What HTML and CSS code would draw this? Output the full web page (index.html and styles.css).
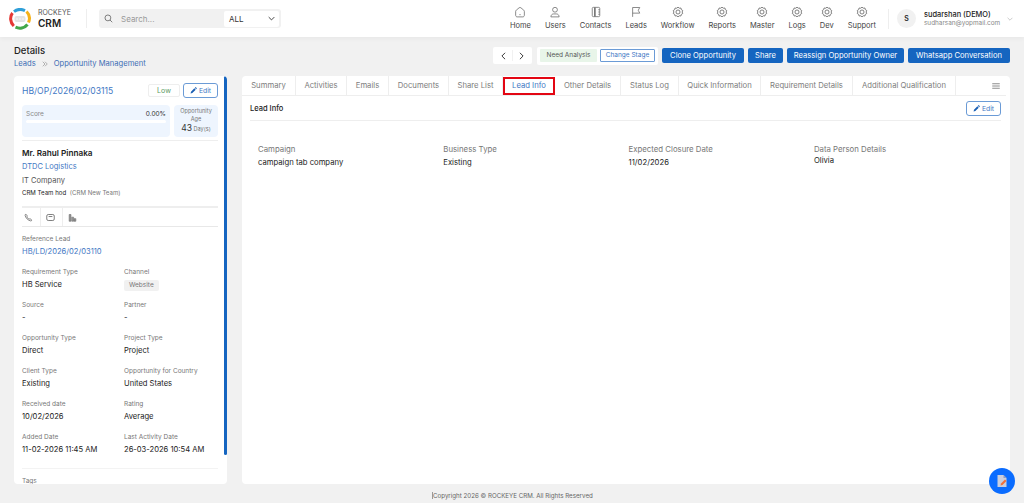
FILE: index.html
```html
<!DOCTYPE html>
<html lang="en">
<head>
    <meta charset="UTF-8">
    <meta name="viewport" content="width=device-width, initial-scale=1.0">
    <title>Rockeye CRM - Details</title>
    <link rel="stylesheet" href="styles.css">
</head>
<body>
    <svg class="defs" width="0" height="0">
        <symbol id="gear" viewBox="0 0 16 16">
            <path d="M8 1.5l1.7 1.4 2.2-.2.5 2.1 1.900 1.200-.8 2 .8 2-1.900 1.200-.5 2.100-2.200-.2L8 14.500l-1.700-1.400-2.200.2-.5-2.100-1.900-1.200.8-2-.8-2 1.900-1.200.5-2.100 2.200.2z" fill="none" stroke="currentColor" stroke-width="1.100"/>
            <circle cx="8" cy="8" r="2.700" fill="none" stroke="currentColor" stroke-width="1.100"/>
        </symbol>
        <symbol id="pencil" viewBox="0 0 12 12">
            <path d="M1 11l.7-3 5.800-5.800 2.300 2.300L4 10.300zM8.300 1.400l.8-.8c.3-.3.7-.3 1 0l1.300 1.300c.3.3.3.7 0 1l-.8.8z" fill="currentColor"/>
        </symbol>
    </svg>

    <header class="topbar">
        <div class="brand">
            <svg class="logo" viewBox="0 0 22 22">
                <path d="M5 3.600C8 1.300 12.500.9 16 2.600" fill="none" stroke="#2f9fd8" stroke-width="3"/>
                <path d="M17.500 3.500C20.500 6.500 21 11 19.500 14.500" fill="none" stroke="#f5b21a" stroke-width="3"/>
                <path d="M18.500 16.500C15.500 20.300 10.500 21 6.500 19.200" fill="none" stroke="#43a84a" stroke-width="3"/>
                <path d="M4.800 18C1 14.500.7 8.500 3.500 5" fill="none" stroke="#e53935" stroke-width="3"/>
                <rect x="5.500" y="8" width="11" height="6" rx="2" fill="#e4e4e4"/>
                <circle cx="8" cy="11" r=".7" fill="#fff"/>
                <circle cx="11" cy="11" r=".7" fill="#fff"/>
                <circle cx="14" cy="11" r=".7" fill="#fff"/>
            </svg>
            <div class="brand-text">
                <span class="brand-top">ROCKEYE</span>
                <span class="brand-name">CRM</span>
            </div>
        </div>
        <div class="search">
            <svg class="search-icon" viewBox="0 0 12 12"><circle cx="5.200" cy="5.200" r="3.900" fill="none" stroke="#666" stroke-width="1.100"/><path d="M8 8l3 3" stroke="#666" stroke-width="1.100"/></svg>
            <span class="search-text">Search...</span>
            <div class="search-select">
                <span>ALL</span>
                <svg class="chev" viewBox="0 0 10 6"><path d="M1 1l4 4 4-4" fill="none" stroke="#333" stroke-width="1.300"/></svg>
            </div>
        </div>
        <nav class="nav">
            <a class="nav-item">
                <svg class="nav-icon" viewBox="0 0 16 16"><path d="M2.200 7.200C2.200 6.500 2.500 6 3 5.600L6.800 2.400c.7-.6 1.700-.6 2.400 0L13 5.600c.5.4.8.9.8 1.600v5.300c0 1.100-.9 2-2 2H4.200c-1.100 0-2-.9-2-2z" fill="none" stroke="currentColor"/><path d="M7.200 11.500h1.600" stroke="currentColor"/></svg>
                Home
            </a>
            <a class="nav-item">
                <svg class="nav-icon" viewBox="0 0 16 16"><circle cx="8" cy="5" r="3.200" fill="none" stroke="currentColor"/><path d="M2.500 14.500c.2-1.900.9-3 2-3.600 1-.5 6-.5 7 0 1.100.6 1.800 1.700 2 3.600z" fill="none" stroke="currentColor"/></svg>
                Users
            </a>
            <a class="nav-item">
                <svg class="nav-icon" viewBox="0 0 16 16"><rect x="3" y="1.800" width="10" height="12.400" rx="1.500" fill="none" stroke="currentColor"/><path d="M6.500 2v12" stroke="currentColor" stroke-width="2"/><path d="M11 5h2M11 8h2M11 11h2" stroke="currentColor"/></svg>
                Contacts
            </a>
            <a class="nav-item">
                <svg class="nav-icon" viewBox="0 0 16 16"><path d="M3.500 14.500V2h9.500l-2 3.700 2 3.800H3.500" fill="none" stroke="currentColor"/></svg>
                Leads
            </a>
            <a class="nav-item"><svg class="nav-icon"><use href="#gear"/></svg>Workflow</a>
            <a class="nav-item"><svg class="nav-icon"><use href="#gear"/></svg>Reports</a>
            <a class="nav-item"><svg class="nav-icon"><use href="#gear"/></svg>Master</a>
            <a class="nav-item"><svg class="nav-icon"><use href="#gear"/></svg>Logs</a>
            <a class="nav-item"><svg class="nav-icon"><use href="#gear"/></svg>Dev</a>
            <a class="nav-item"><svg class="nav-icon"><use href="#gear"/></svg>Support</a>
        </nav>
        <div class="user">
            <div class="avatar">S</div>
            <div class="user-text">
                <span class="user-name">sudarshan (DEMO)</span>
                <span class="user-mail">sudharsan@yopmail.com</span>
            </div>
            <svg class="user-chev" viewBox="0 0 10 6"><path d="M1 1l4 4 4-4" fill="none" stroke="#aaa" stroke-width="1"/></svg>
        </div>
    </header>

    <div class="page-head">
        <div>
            <h1>Details</h1>
            <div class="crumbs">
                <a>Leads</a>
                <svg class="crumb-sep" viewBox="0 0 8 8"><path d="M1 1l3 3-3 3M4 1l3 3-3 3" fill="none" stroke="#999" stroke-width="1"/></svg>
                <a>Opportunity Management</a>
            </div>
        </div>
        <div class="actions">
            <div class="pager">
                <svg class="pager-icon" viewBox="0 0 6 10"><path d="M5 1L1 5l4 4" fill="none" stroke="#333" stroke-width="1.200"/></svg>
                <span class="pager-line"></span>
                <svg class="pager-icon" viewBox="0 0 6 10"><path d="M1 1l4 4-4 4" fill="none" stroke="#333" stroke-width="1.200"/></svg>
            </div>
            <div class="stage">
                <span class="stage-chip">Need Analysis</span>
                <span class="stage-btn">Change Stage</span>
            </div>
            <button class="btn btn-clone">Clone Opportunity</button>
            <button class="btn btn-share">Share</button>
            <button class="btn btn-reassign">Reassign Opportunity Owner</button>
            <button class="btn btn-whatsapp">Whatsapp Conversation</button>
        </div>
    </div>

    <main class="content">
        <aside class="side">
            <div class="side-scroll"></div>
            <div class="side-top">
                <a class="opp-id">HB/OP/2026/02/03115</a>
                <span class="low">Low</span>
                <button class="edit"><svg class="pencil"><use href="#pencil"/></svg>Edit</button>
            </div>
            <div class="scores">
                <div class="score">
                    <div class="score-row"><span>Score</span><b>0.00%</b></div>
                    <div class="score-bar"></div>
                </div>
                <div class="age">
                    <div class="age-label">Opportunity Age</div>
                    <div class="age-val"><b>43</b> Day(s)</div>
                </div>
            </div>
            <div class="person">
                <div class="person-name">Mr. Rahul Pinnaka</div>
                <a class="person-co">DTDC Logistics</a>
                <div class="person-type">IT Company</div>
                <div class="person-team">CRM Team hod <span>(CRM New Team)</span></div>
            </div>
            <div class="contact-icons">
                <div class="contact-cell">
                    <svg class="contact-icon" viewBox="0 0 12 12"><path d="M2.500 1.500c-.8.300-1.300 1-1 2 .8 3.200 3.800 6.200 7 7 1 .3 1.700-.2 2-1l-2.500-2-1.300.8C5.500 7.600 4.400 6.500 3.700 5.300L4.500 4z" fill="none" stroke="#666" stroke-width="1"/></svg>
                </div>
                <div class="contact-cell">
                    <svg class="contact-icon" viewBox="0 0 12 12"><rect x="1" y="2" width="10" height="8" rx="2" fill="none" stroke="#555" stroke-width="1"/><path d="M3.500 4.700h5" stroke="#555" stroke-width="1"/></svg>
                </div>
                <div class="contact-cell">
                    <svg class="contact-icon" viewBox="0 0 12 12"><path d="M1.500 11V2h2.500v9zM5 11V5.500h2.500V11zM8 11V7.500h2.500V11z" fill="#999" stroke="#666" stroke-width=".7"/></svg>
                </div>
            </div>
            <div class="field ref-field">
                <label>Reference Lead</label>
                <a>HB/LD/2026/02/03110</a>
            </div>
            <div class="fields">
                <div class="field"><label>Requirement Type</label><p>HB Service</p></div>
                <div class="field"><label>Channel</label><p><span class="tag">Website</span></p></div>
                <div class="field"><label>Source</label><p>-</p></div>
                <div class="field"><label>Partner</label><p>-</p></div>
                <div class="field"><label>Opportunity Type</label><p>Direct</p></div>
                <div class="field"><label>Project Type</label><p>Project</p></div>
                <div class="field"><label>Client Type</label><p>Existing</p></div>
                <div class="field"><label>Opportunity for Country</label><p>United States</p></div>
                <div class="field"><label>Received date</label><p>10/02/2026</p></div>
                <div class="field"><label>Rating</label><p>Average</p></div>
                <div class="field"><label>Added Date</label><p>11-02-2026 11:45 AM</p></div>
                <div class="field"><label>Last Activity Date</label><p>26-03-2026 10:54 AM</p></div>
            </div>
            <div class="tags-row"><label>Tags</label></div>
        </aside>

        <section class="panel">
            <div class="tabs">
                <a class="tab tab-summary">Summary</a>
                <a class="tab tab-activities">Activities</a>
                <a class="tab tab-emails">Emails</a>
                <a class="tab tab-documents">Documents</a>
                <a class="tab tab-share">Share List</a>
                <a class="tab tab-lead active">Lead Info</a>
                <a class="tab tab-other">Other Details</a>
                <a class="tab tab-status">Status Log</a>
                <a class="tab tab-quick">Quick Information</a>
                <a class="tab tab-req">Requirement Details</a>
                <a class="tab tab-add">Additional Qualification</a>
                <div class="tab-menu">
                    <svg class="menu-icon" viewBox="0 0 10 8"><path d="M0 1h10M0 4h10M0 7h10" stroke="#666" stroke-width="1"/></svg>
                </div>
            </div>
            <div class="panel-head">
                <h2>Lead Info</h2>
                <button class="edit"><svg class="pencil"><use href="#pencil"/></svg>Edit</button>
            </div>
            <div class="info">
                <div class="info-col"><label>Campaign</label><p>campaign tab company</p></div>
                <div class="info-col"><label>Business Type</label><p>Existing</p></div>
                <div class="info-col"><label>Expected Closure Date</label><p>11/02/2026</p></div>
                <div class="info-col"><label>Data Person Details</label><p class="info-raised">Olivia</p></div>
            </div>
        </section>
    </main>

    <footer class="foot"><span class="foot-text">Copyright 2026 © ROCKEYE CRM. All Rights Reserved</span></footer>

    <div class="fab">
        <svg class="fab-icon" viewBox="0 0 10 12"><path d="M.5 0h6L9.500 3v9H.5z" fill="#c9cede"/><path d="M6.500 0v3h3z" fill="#8d9ac0"/><path d="M3.500 10.500l.5-2L8 4.500l1.500 1.500-4 4z" fill="#f0703c"/></svg>
    </div>
</body>
</html>
```

FILE: styles.css
```css
* {
    box-sizing: border-box;
}

html, body {
    height: 503px;
    overflow: hidden;
}

body {
    position: relative;
    margin: 0;
    background-color: #f1f1f1;
    font-family: Inter, "Liberation Sans", sans-serif;
    font-size: 8px;
    color: #2a2a2a;
}

.defs {
    position: absolute;
}

label {
    display: block;
    color: #777;
}

p {
    margin: 0;
}

/* top bar */
.topbar {
    display: flex;
    align-items: center;
    height: 37px;
    padding-left: 9px;
    background-color: white;
    box-shadow: 0 2px 4px rgba(0, 0, 0, 0.04);
}

.brand {
    display: flex;
    align-items: center;
    width: 78px;
    height: 19px;
    border-right: 1px solid #eee;
}

.logo {
    width: 22px;
    height: 22px;
    flex: none;
}

.brand-text {
    display: flex;
    flex-direction: column;
    margin-left: 7px;
}

.brand-top {
    font-size: 7px;
    line-height: 9px;
    color: #555;
}

.brand-name {
    font-size: 10px;
    line-height: 13px;
    font-weight: 600;
    color: #222;
}

.search {
    display: flex;
    align-items: center;
    width: 182px;
    height: 19px;
    margin-left: 12px;
    padding: 0 2px 0 4px;
    background-color: #f1f1f1;
    border-radius: 3px;
}

.search-icon {
    width: 9px;
    height: 9px;
    margin-left: 1px;
}

.search-text {
    flex: 1;
    margin-left: 8px;
    color: #999;
}

.search-select {
    display: flex;
    align-items: center;
    justify-content: space-between;
    width: 55px;
    height: 16px;
    padding: 0 4px 0 5px;
    background-color: white;
    border-radius: 2px;
    color: #333;
}

.chev {
    width: 7px;
    height: 5px;
}

.nav {
    display: flex;
    gap: 14px;
    margin-left: auto;
}

.nav-item {
    display: flex;
    flex-direction: column;
    align-items: center;
    font-size: 7.5px;
    line-height: 10px;
    color: #444;
}

.nav-icon {
    width: 12px;
    height: 12px;
    margin-bottom: 3px;
    color: #666;
}

.user {
    display: flex;
    align-items: center;
    width: 136px;
    height: 20px;
    margin-left: 12px;
    padding-left: 8px;
    border-left: 1px solid #eee;
}

.avatar {
    display: flex;
    align-items: center;
    justify-content: center;
    width: 19px;
    height: 19px;
    border-radius: 50%;
    background-color: #f1f1f1;
    font-weight: 600;
    font-size: 7px;
}

.user-text {
    display: flex;
    flex-direction: column;
    width: 78px;
    margin-left: 8px;
}

.user-name {
    font-size: 7.4px;
    line-height: 9px;
    font-weight: 500;
    color: #222;
}

.user-mail {
    font-size: 6.4px;
    line-height: 8px;
    color: #888;
}

.user-chev {
    width: 6px;
    height: 4px;
    margin-left: 5px;
}

/* title row */
.page-head {
    display: flex;
    justify-content: space-between;
    height: 39px;
    padding: 8px 14px 0;
}

h1 {
    margin: 0;
    font-size: 9.5px;
    line-height: 12px;
    font-weight: 500;
    color: #222;
}

.crumbs {
    display: flex;
    align-items: center;
    gap: 6px;
    margin-top: 1px;
    line-height: 12px;
    font-size: 7.6px;
    color: #3f6fb5;
}

.crumb-sep {
    width: 6px;
    height: 6px;
}

.actions {
    display: flex;
    align-items: center;
    height: 19px;
    margin-top: 1px;
}

.pager {
    display: flex;
    align-items: center;
    justify-content: space-around;
    width: 39px;
    height: 17px;
    padding: 0 5px;
    background-color: white;
    border-radius: 2px;
}

.pager-icon {
    width: 5px;
    height: 8px;
}

.pager-line {
    width: 1px;
    height: 11px;
    background-color: #f1f1f1;
}

.stage {
    display: flex;
    gap: 3px;
    align-items: center;
    width: 121px;
    height: 18px;
    margin-left: 5px;
    padding: 0 3px;
    background-color: white;
    border-radius: 2px;
}

.stage-chip {
    width: 57px;
    height: 13px;
    line-height: 13px;
    text-align: center;
    font-size: 6.5px;
    background-color: #e8f5e9;
    color: #555;
    border-radius: 1px;
}

.stage-btn {
    width: 55px;
    height: 13px;
    line-height: 11px;
    text-align: center;
    font-size: 6.5px;
    color: #3f78c4;
    border: 1px solid #6b9bd6;
    border-radius: 1px;
}

.btn {
    height: 15px;
    margin-left: 4px;
    padding: 0;
    font-family: inherit;
    font-size: 7.6px;
    color: white;
    background-color: #1565c0;
    border: none;
    border-radius: 2px;
}

.btn-clone { width: 82px; }
.btn-share { width: 35px; }
.btn-reassign { width: 117px; }
.btn-whatsapp { width: 102px; }

/* main */
.content {
    display: flex;
    gap: 15px;
    height: 408px;
    padding: 0 14px;
}

.side {
    position: relative;
    width: 213px;
    padding: 7px 9px 0 8px;
    overflow: hidden;
    background-color: white;
    border-radius: 4px;
}

.side-scroll {
    position: absolute;
    top: 0;
    right: 0;
    width: 3px;
    height: 379px;
    background-color: #1565c0;
    border-radius: 2px;
}

.side-top {
    display: flex;
    align-items: center;
}

.opp-id {
    flex: 1;
    font-size: 8.6px;
    color: #3f78c4;
}

.low {
    width: 32px;
    height: 13px;
    line-height: 11px;
    margin-right: 3px;
    text-align: center;
    font-size: 7px;
    color: #5c9a5f;
    border: 1px solid #eee;
    border-radius: 2px;
}

.edit {
    display: flex;
    align-items: center;
    justify-content: center;
    gap: 2px;
    width: 35px;
    height: 15px;
    padding: 0;
    font-family: inherit;
    font-size: 6.8px;
    color: #3f78c4;
    background-color: white;
    border: 1px solid #6b9bd6;
    border-radius: 3px;
}

.pencil {
    width: 7px;
    height: 7px;
    color: #1a5fb4;
}

.scores {
    display: flex;
    gap: 4px;
    margin-top: 7px;
    padding-bottom: 3px;
    border-bottom: 1px solid #eee;
}

.score {
    width: 148px;
    height: 32px;
    padding: 5px 4px;
    background-color: #eef5fe;
    border-radius: 4px;
}

.score-row {
    display: flex;
    justify-content: space-between;
    font-size: 6.5px;
    line-height: 8px;
    color: #888;
}

.score-row b {
    font-weight: 400;
    color: #333;
}

.score-bar {
    height: 3px;
    margin-top: 2px;
    background-color: white;
    border-radius: 2px;
}

.age {
    width: 44px;
    height: 32px;
    padding: 2px 5px 0;
    text-align: center;
    background-color: #eef5fe;
    border-radius: 4px;
    font-size: 5.6px;
    line-height: 8px;
    color: #777;
}

.age-val {
    white-space: nowrap;
    margin-top: 1px;
}

.age-val b {
    font-size: 8.5px;
    font-weight: 400;
    color: #333;
}

.person {
    height: 67px;
    padding-top: 5px;
    border-bottom: 2px solid #eee;
    line-height: 14px;
    font-size: 7.5px;
}

.person-name {
    font-size: 8.2px;
    font-weight: 600;
    color: #222;
}

.person-co {
    display: block;
    color: #3f78c4;
}

.person-type {
    color: #555;
}

.person-team {
    font-size: 6.1px;
    line-height: 10px;
    color: #222;
}

.person-team span {
    margin-left: 2px;
    color: #777;
}

.contact-icons {
    display: flex;
    align-items: center;
    height: 19px;
    border-bottom: 1px solid #e8e8e8;
}

.contact-cell {
    display: flex;
    align-items: center;
    height: 18px;
    padding-left: 5px;
    border-right: 1px solid #eee;
}

.contact-cell:first-child {
    width: 19px;
    padding-left: 2px;
}

.contact-cell:nth-child(2) {
    width: 22px;
}

.contact-cell:last-child {
    border-right: none;
}

.contact-icon {
    width: 9px;
    height: 9px;
}

.field label {
    font-size: 6.5px;
    line-height: 9px;
}

.field p, .field a {
    display: block;
    margin-top: 3px;
    font-size: 7.6px;
    line-height: 10px;
    color: #222;
}

.ref-field {
    margin-top: 8px;
}

.field a {
    color: #3f78c4;
}

.fields {
    display: grid;
    grid-template-columns: 102px 1fr;
    grid-auto-rows: 33px;
    margin-top: 11px;
}

.tag {
    display: inline-block;
    padding: 0 5px;
    margin-top: -1px;
    font-size: 6.5px;
    line-height: 11px;
    color: #777;
    background-color: #f1f1f1;
    border-radius: 2px;
}

.tags-row {
    margin-top: 2px;
    padding-top: 8px;
    border-top: 1px solid #f3f3f3;
}

.tags-row label {
    font-size: 6.5px;
    line-height: 9px;
}

/* right panel */
.panel {
    width: 768px;
    background-color: white;
    border-radius: 4px;
}

.tabs {
    display: flex;
    height: 20px;
    width: 764px;
    border-bottom: 1px solid #eee;
}

.tab {
    flex: none;
    height: 19px;
    line-height: 19px;
    text-align: center;
    font-size: 7.7px;
    color: #7d7d7d;
    border-right: 1px solid #eee;
}

.tab-summary { width: 54px; }
.tab-activities { width: 51px; }
.tab-emails { width: 42px; }
.tab-documents { width: 60px; }
.tab-share { width: 54px; }
.tab-lead { width: 52px; }
.tab-other { width: 66px; }
.tab-status { width: 58px; }
.tab-quick { width: 82px; }
.tab-req { width: 92px; }
.tab-add { width: 103px; }

.tab.active {
    height: 18px;
    margin-top: 1px;
    line-height: 14px;
    color: #3f78c4;
    border: 2px solid #e30613;
}

.tab-menu {
    display: flex;
    flex: 1;
    align-items: center;
    justify-content: flex-end;
    padding-right: 6px;
}

.menu-icon {
    width: 8px;
    height: 6px;
}

.panel-head {
    display: flex;
    align-items: center;
    justify-content: space-between;
    height: 25px;
    margin: 0 9px 0 8px;
    border-bottom: 1px solid #eee;
}

h2 {
    margin: 0;
    font-size: 7.5px;
    font-weight: 500;
    color: #222;
}

.info {
    display: grid;
    grid-template-columns: repeat(4, 185.3px);
    margin-top: 23px;
    padding-left: 16px;
}

.info-col label {
    font-size: 7.8px;
    line-height: 10px;
}

.info-col p {
    margin-top: 4px;
    font-size: 7.7px;
    line-height: 10px;
    color: #222;
}

.info-col .info-raised {
    margin-top: 2px;
}

.foot {
    padding: 7px 0 0 432px;
    line-height: 10px;
    font-size: 6.2px;
    color: #666;
}

.foot-text {
    border-left: 1px solid #999;
}

.fab {
    position: absolute;
    left: 989px;
    top: 468px;
    display: flex;
    align-items: center;
    justify-content: center;
    width: 26px;
    height: 26px;
    background-color: #0a6cff;
    border-radius: 50%;
}

.fab-icon {
    width: 10px;
    height: 12px;
}
```
